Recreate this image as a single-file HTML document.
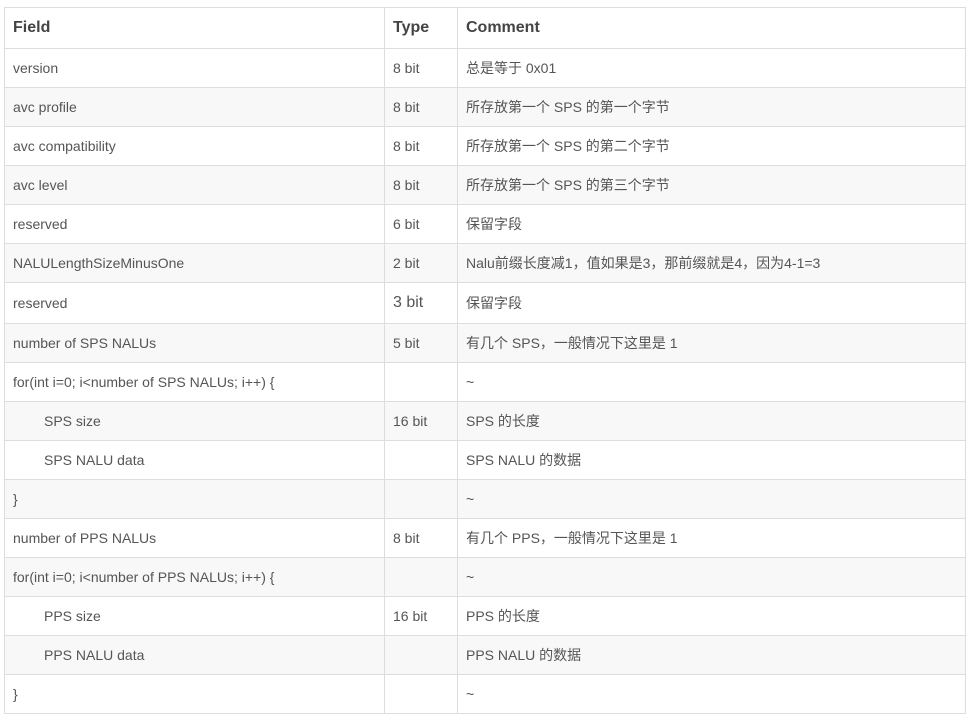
<!DOCTYPE html>
<html><head><meta charset="utf-8"><style>
body{margin:0;background:#fff;font-family:"Liberation Sans","Noto Sans CJK SC",sans-serif;}
table{position:absolute;left:4px;top:7px;border-collapse:collapse;width:962px;table-layout:fixed;color:#555;font-size:14px;}
td,th{border:1px solid #ddd;padding:0 8px;height:38px;text-align:left;white-space:nowrap;}
th{height:40px;font-size:16px;color:#444;font-weight:bold;}
tr:nth-child(odd) td{background:#f8f8f8;}
.i{padding-left:39px;}
.big{font-size:16px;}
</style></head><body>
<table>
<colgroup><col style="width:380px"><col style="width:73px"><col></colgroup>
<tr><th>Field</th><th>Type</th><th>Comment</th></tr>
<tr><td>version</td><td>8 bit</td><td>总是等于 0x01</td></tr>
<tr><td>avc profile</td><td>8 bit</td><td>所存放第一个 SPS 的第一个字节</td></tr>
<tr><td>avc compatibility</td><td>8 bit</td><td>所存放第一个 SPS 的第二个字节</td></tr>
<tr><td>avc level</td><td>8 bit</td><td>所存放第一个 SPS 的第三个字节</td></tr>
<tr><td>reserved</td><td>6 bit</td><td>保留字段</td></tr>
<tr><td>NALULengthSizeMinusOne</td><td>2 bit</td><td>Nalu前缀长度减1，值如果是3，那前缀就是4，因为4-1=3</td></tr>
<tr><td style="height:40px">reserved</td><td class="big">3 bit</td><td>保留字段</td></tr>
<tr><td>number of SPS NALUs</td><td>5 bit</td><td>有几个 SPS，一般情况下这里是 1</td></tr>
<tr><td>for(int i=0; i&lt;number of SPS NALUs; i++) {</td><td></td><td>~</td></tr>
<tr><td class="i">SPS size</td><td>16 bit</td><td>SPS 的长度</td></tr>
<tr><td class="i">SPS NALU data</td><td></td><td>SPS NALU 的数据</td></tr>
<tr><td>}</td><td></td><td>~</td></tr>
<tr><td>number of PPS NALUs</td><td>8 bit</td><td>有几个 PPS，一般情况下这里是 1</td></tr>
<tr><td>for(int i=0; i&lt;number of PPS NALUs; i++) {</td><td></td><td>~</td></tr>
<tr><td class="i">PPS size</td><td>16 bit</td><td>PPS 的长度</td></tr>
<tr><td class="i">PPS NALU data</td><td></td><td>PPS NALU 的数据</td></tr>
<tr><td>}</td><td></td><td>~</td></tr>
</table>
</body></html>
